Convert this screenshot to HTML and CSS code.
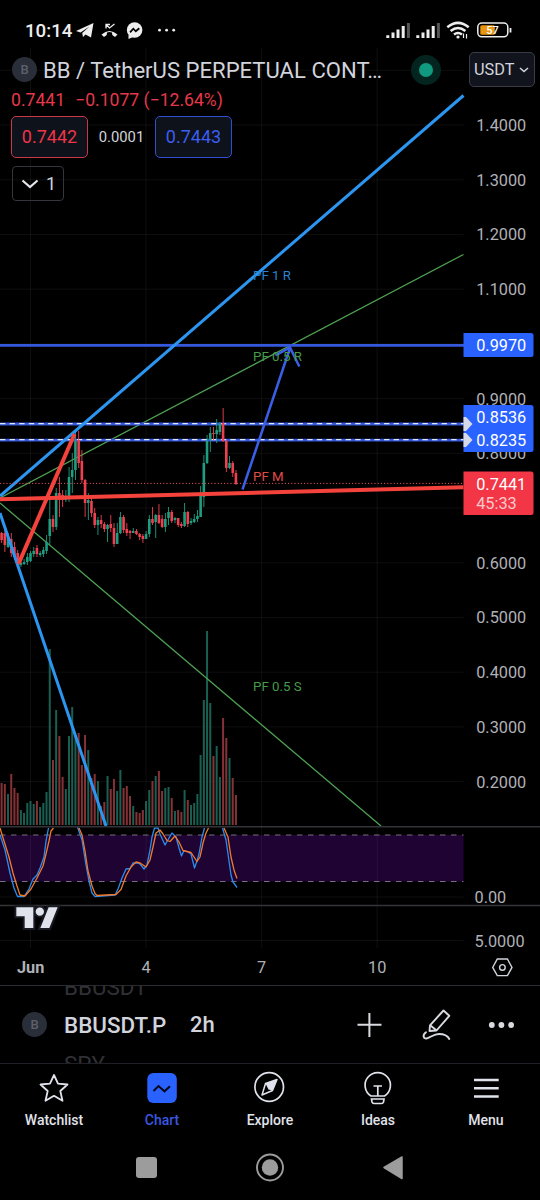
FILE: index.html
```html
<!DOCTYPE html>
<html lang="en">
<head>
    <meta charset="UTF-8">
    <title>BBUSDT.P</title>
    <link rel="stylesheet" href="styles.css">
</head>
<body>
<div class="status">
    <span class="clock">10:14</span>
    <svg class="notif" width="104" height="20" viewBox="76 20 104 20">
        <path d="M76 31 L93.5 23 L91 37.5 L85.5 34.5 L83 37 L82.2 33 L89.5 26.5 L80.5 32.5Z" fill="#eee"/>
        <path d="M101.5 34.5 Q109.5 27.5 117.5 34.5 L115 37 L112.3 35 L112 32.6 Q109.5 31.6 107 32.6 L106.7 35 L104 37Z" fill="#eee"/>
        <path d="M106 28.5 V24.5 H110 M106.3 24.8 L109.5 28 L114.5 24" fill="none" stroke="#eee" stroke-width="1.3"/>
        <circle cx="134.6" cy="30" r="7.8" fill="#eee"/>
        <path d="M128.5 35 L128.5 39 L133 37Z" fill="#eee"/>
        <path d="M130 32.3 L133.3 28.7 L135.8 31.3 L139.3 28.3" fill="none" stroke="#000" stroke-width="1.8"/>
        <circle cx="159.5" cy="30.2" r="1.4" fill="#eee"/>
        <circle cx="166.6" cy="30.2" r="1.4" fill="#eee"/>
        <circle cx="173.7" cy="30.2" r="1.4" fill="#eee"/>
    </svg>
    <svg class="signal" width="128" height="22" viewBox="385 19 128 22">
        <g stroke="#eee" stroke-width="3">
            <path d="M387.8 38 V35.2 M393 38 V32.5 M398 38 V29.5 M403.2 38 V26"/>
            <path d="M417.8 38 V35.2 M423 38 V32.5 M428 38 V29.5 M433.2 38 V26"/>
            <path d="M408.4 38 V23 M438.4 38 V23" stroke="#555"/>
        </g>
        <g fill="none" stroke="#eee" stroke-width="2.5">
            <path d="M447.3 27.2 Q458 18.5 468.7 27.2"/>
            <path d="M450.6 31 Q458 25 465.4 31"/>
            <path d="M454 34.6 Q458 31.5 462 34.6"/>
        </g>
        <circle cx="458" cy="37" r="1.6" fill="#eee"/>
        <path d="M463.5 33.5 V38 M466.5 34 V38.5" stroke="#eee" stroke-width="1.2"/>
        <rect x="477.8" y="23" width="30" height="13.8" rx="4" fill="none" stroke="#eee" stroke-width="1.5"/>
        <rect x="480.3" y="25.3" width="14.5" height="9.4" rx="1.5" fill="#e8960f"/>
        <path d="M510.5 28 V32.5" stroke="#eee" stroke-width="1.8"/>
        <text x="492.6" y="34.4" text-anchor="middle" class="battery">57</text>
    </svg>
</div>

<div class="chart">
    <svg class="plot" width="540" height="938" viewBox="0 48 540 938">
        <g id="grid" class="grid"></g>
        <rect x="0" y="835" width="463.5" height="46.5" fill="#1f0333"/>
        <g class="grid">
            <path d="M30.5 835 V881 M146.1 835 V881 M261.6 835 V881 M377.2 835 V881"/>
        </g>
        <path class="band" d="M0 835 H463.5 M0 881.5 H463.5"/>
        <g id="volume"></g>

        <g class="pitchfork">
            <path d="M0 498 L463.5 254.5 M0 503 L381 826" stroke="#4ea052" stroke-width="1.3"/>
            <path d="M0 345.3 H464 M0 424 H464 M0 440.2 H464" stroke="#3558dc" stroke-width="2.8"/>
            <path d="M0 423.6 H464 M0 439.6 H464" stroke="#dfe3f5" stroke-width="1.2" stroke-dasharray="5.4 4.2"/>
        </g>
        <g id="candles"></g>
        <g class="pitchfork">
            <path d="M0 496 L463.5 95.5 M0 513 L106 826" stroke="#2b95f0" stroke-width="3"/>
            <path d="M0 499.3 L463.5 487.3" stroke="#f4433c" stroke-width="4"/>
            <path d="M18.5 564 L74.5 434" stroke="#f4433c" stroke-width="4"/>
            <path d="M0 483.4 H464" stroke="#d9505a" stroke-width="1" stroke-dasharray="1.2 2"/>
            <path d="M242.5 489.5 L290 348 M275.5 355.5 L290 347.5 L299.3 366.5" stroke="#3a5fe6" stroke-width="2.5"/>
        </g>
        <g class="fork-label">
            <text x="253" y="280.3" fill="#2b82d2">PF 1 R</text>
            <text x="253" y="361.1" fill="#479a4a">PF 0.5 R</text>
            <text x="253" y="480.7" fill="#e04a48">PF M</text>
            <text x="253" y="691.1" fill="#479a4a">PF 0.5 S</text>
        </g>

        <!-- stochastic -->
        <g fill="none" stroke-width="1.3" stroke-linejoin="round">
            <path stroke="#2b8cf0" d="M0 835 L5 850 L10 873 L14 888 L17.5 896.5 L24 896.5 L29 889 L33 879 L37 875 L40 868 L44 857 L46 841 L48.5 828 M77.5 827 L82 840 L86 865 L89 881 L92 893 L95 896.5 L115 895 L118 889 L122 878 L126 869 L130 868.5 L133 863 L137 863 L140 864 L144 869 L147 865 L150 850 L152 837 L154.5 828 L158 828 L160 834 L165 845 L169 838 L172 833 L176 837 L179 848 L181.5 856 L184 850.5 L188 852 L191 854 L194.5 868 L197 861 L199 854 L202 837 L204.5 828 M222.5 828 L226 840 L229 861 L231 875 L233 882 L237 887.5"/>
            <path stroke="#f07a2c" d="M0 828 L4 841 L9 857 L13 873 L17 886 L20 895 L25 896 L31 889 L37 878 L43 866 L46 854 L49 841 L51 831 L53.5 828 M79 828 L82 835 L85 851 L88 871 L92 886 L95 893.5 L97 895.5 L116 894.5 L121 889.5 L126 876 L131 867 L136 862 L140 863 L146 867 L150 860 L153 847 L156 833 L160 830 L163 834 L167 840.5 L170 841.5 L175 836 L179 842 L183 850.5 L191 852.5 L197 861.5 L200 857 L203 843 L206 833 L208.5 828 M224 828 L228 837 L231 857 L234 870 L237 878.5"/>
        </g>

        <path class="divider" d="M0 826.8 H540 M0 905.4 H540"/>
        <g transform="translate(0 820) scale(.3333)">
            <path id="tv" d="M49 262 H100 V324 H74 V289 H49Z M146 262 H173 L148 324 H121Z M132 275 A12.5 12.5 0 1 1 107 275 A12.5 12.5 0 1 1 132 275Z" fill="#e0e3eb" stroke="#171a22" stroke-width="12" paint-order="stroke"/>
        </g>

        <g id="prices" class="axis"></g>
        <g class="axis">
            <text x="474.5" y="902.9">0.00</text>
            <text x="474.5" y="946.9">5.0000</text>
            <text x="17" y="973" class="month">Jun</text>
            <text x="146.2" y="973" text-anchor="middle">4</text>
            <text x="261.6" y="973" text-anchor="middle">7</text>
            <text x="377.2" y="973" text-anchor="middle">10</text>
        </g>
        <path d="M497.3 959 H507.4 L512 967.4 L507.4 975.6 H497.3 L492.7 967.4Z" fill="none" stroke="#d1d4dc" stroke-width="1.4"/>
        <circle cx="502.4" cy="967.4" r="2.8" fill="none" stroke="#d1d4dc" stroke-width="1.4"/>

        <g class="tags">
            <path d="M463.5 333 H531 Q533.5 333 533.5 335.5 V354.5 Q533.5 357 531 357 H463.5Z" fill="#2962ff"/>
            <path d="M463.5 405 H531 Q533.5 405 533.5 407.5 V449.5 Q533.5 452 531 452 H463.5Z" fill="#2962ff"/>
            <path d="M463.5 471.5 H531 Q533.5 471.5 533.5 474 V512.5 Q533.5 515 531 515 H463.5Z" fill="#f23645"/>
            <path d="M463.5 417 H466 L472.5 424 L466 431 H463.5Z M463.5 433 H466 L472.5 440 L466 447 H463.5Z" fill="#d5d9e8"/>
            <text x="476.2" y="351.2">0.9970</text>
            <text x="476.2" y="422.7">0.8536</text>
            <text x="476.2" y="446.1">0.8235</text>
            <text x="476.2" y="489.6">0.7441</text>
            <text x="476.2" y="509" fill="#fcc9cc">45:33</text>
        </g>
    </svg>

    <div class="legend">
        <div class="title-row">
            <span class="coin">B</span>
            <span class="title">BB / TetherUS PERPETUAL CONT…</span>
            <span class="market"></span>
            <span class="currency">USDT
                <svg width="10" height="6" viewBox="0 0 10 6"><path d="M1 1 L5 4.5 L9 1" fill="none" stroke="#d1d4dc" stroke-width="1.6"/></svg>
            </span>
        </div>
        <div class="change"><span>0.7441</span><span>−0.1077 (−12.64%)</span></div>
        <div class="quotes">
            <span class="quote sell">0.7442</span>
            <span class="spread">0.0001</span>
            <span class="quote buy">0.7443</span>
        </div>
        <div class="collapse">
            <svg width="18" height="10" viewBox="0 0 18 10"><path d="M1.5 1.5 L9 8 L16.5 1.5" fill="none" stroke="#e4e6ec" stroke-width="2.2"/></svg>
            <span>1</span>
        </div>
    </div>
</div>

<div class="toolbar">
    <span class="coin">B</span>
    <div class="symbols">
        <span class="near">BBUSDT</span>
        <span>BBUSDT.P</span>
        <span class="near">SPY</span>
    </div>
    <span class="interval">2h</span>
    <svg class="tools" width="160" height="36" viewBox="356 1007 160 36">
        <path d="M357.5 1024.8 H381.5 M369.4 1013 V1037" stroke="#d8dae0" stroke-width="2"/>
        <g fill="none" stroke="#d8dae0" stroke-width="1.9" stroke-linejoin="round" stroke-linecap="round">
            <path d="M443.5 1010.5 L449.3 1015.8 L436.5 1030.5 L429.5 1031 L430 1025.3Z M430.5 1025.5 L436 1030"/>
            <path d="M426 1032.3 C422 1035 423.5 1039.5 427 1038.3 C431 1037 434 1034 439 1034 C444.5 1034 448 1036.5 449.3 1039"/>
        </g>
        <circle cx="491.8" cy="1025" r="2.9" fill="#d8dae0"/>
        <circle cx="501.4" cy="1025" r="2.9" fill="#d8dae0"/>
        <circle cx="511.1" cy="1025" r="2.9" fill="#d8dae0"/>
    </svg>
</div>

<div class="tabs">
    <a class="tab">
        <svg width="32" height="36" viewBox="-16 -18 32 36"><path d="M0 -13 L4 -4.3 L13.5 -3.5 L6.3 3 L8.5 12.8 L0 7.8 L-8.5 12.8 L-6.3 3 L-13.5 -3.5 L-4 -4.3Z" fill="none" stroke="#e0e3eb" stroke-width="1.8" stroke-linejoin="round"/></svg>
        <span>Watchlist</span>
    </a>
    <a class="tab active">
        <svg width="32" height="36" viewBox="-16 -18 32 36"><rect x="-14.7" y="-15" width="29.5" height="30" rx="6" fill="#2962ff"/><path d="M-8.5 3 L-3.5 -2 L2.5 3.3 L8 -1.8" fill="none" stroke="#05081a" stroke-width="2"/></svg>
        <span>Chart</span>
    </a>
    <a class="tab">
        <svg width="32" height="36" viewBox="-16 -18 32 36"><circle cx="-.8" cy="-1" r="14.3" fill="none" stroke="#e0e3eb" stroke-width="1.7"/><path d="M7 -8.5 L2.5 2.5 L-8 7 L-4.5 -4.5Z" fill="none" stroke="#e0e3eb" stroke-width="1.5" stroke-linejoin="round"/><path d="M7 -8.5 L2.5 2.5 L-1.5 1.5 L-4.5 -4.5Z" fill="#e0e3eb"/></svg>
        <span>Explore</span>
    </a>
    <a class="tab">
        <svg width="32" height="36" viewBox="-16 -18 32 36"><path d="M-7 8 A12.7 12.7 0 1 1 6.5 8 Z M-6.5 11 H6 L5.5 14 Q5 15.5 3.5 15.5 H-4 Q-5.5 15.5 -6 14Z M-4.5 -2 H4 M-.2 -2 V8" fill="none" stroke="#e0e3eb" stroke-width="1.7"/></svg>
        <span>Ideas</span>
    </a>
    <a class="tab">
        <svg width="32" height="36" viewBox="-16 -18 32 36"><path d="M-12 -8 H12.7 M-12 .3 H12.7 M-12 8.5 H12.7" stroke="#e0e3eb" stroke-width="2.4"/></svg>
        <span>Menu</span>
    </a>
</div>

<div class="nav">
    <svg width="270" height="32" viewBox="135 1152 270 32">
        <rect x="136" y="1157" width="21" height="21" rx="3" fill="#9c9c9c"/>
        <circle cx="270" cy="1167.5" r="13" fill="none" stroke="#9c9c9c" stroke-width="1.9"/>
        <circle cx="270" cy="1167.5" r="8.2" fill="#9c9c9c"/>
        <path d="M384 1167.5 L402 1157 V1178.5Z" fill="#9c9c9c" stroke="#9c9c9c" stroke-width="1.5" stroke-linejoin="round"/>
    </svg>
</div>

<script src="chart.js"></script>
</body>
</html>
```

FILE: styles.css
```css
* {
    margin: 0;
    padding: 0;
    box-sizing: border-box;
}

body {
    width: 540px;
    height: 1200px;
    overflow: hidden;
    background-color: #000;
    color: #d1d4dc;
    font-family: Roboto, "Liberation Sans", sans-serif;
}

svg {
    display: block;
    flex: none;
}

/* status bar */
.status {
    display: flex;
    align-items: center;
    height: 48px;
    padding: 12px 27px 0 25px;
}

.clock {
    width: 51px;
    padding-top: 1px;
    font-size: 18.7px;
    font-weight: 500;
    color: #eee;
}

.signal {
    margin-left: auto;
}

.battery {
    font-size: 11px;
    font-weight: 500;
    fill: #fff;
}

/* chart */
.chart {
    display: grid;
    height: 938px;
    border-bottom: 1px solid #2a2a30;
}

.plot,
.legend {
    grid-area: 1 / 1;
}

.grid {
    stroke: #fff;
    stroke-opacity: .055;
}

.band {
    stroke: #77707f;
    stroke-dasharray: 5.5 5.5;
}

.divider {
    stroke: #34343b;
    stroke-width: 1.5;
}

.pitchfork {
    fill: none;
}

.fork-label {
    font-size: 13.3px;
}

.axis {
    font-size: 16.3px;
    fill: #b0b1b6;
}

.month {
    font-weight: 700;
}

.tags {
    font-size: 16.3px;
    fill: #fff;
}

.legend {
    padding: 4px 5px 0 11px;
}

.title-row {
    display: flex;
    align-items: center;
    height: 35px;
    padding-left: 1px;
}

.coin {
    width: 25px;
    height: 25px;
    border-radius: 50%;
    background-color: #2a2e39;
    color: #5d606b;
    font-size: 13px;
    font-weight: 500;
    line-height: 25px;
    text-align: center;
}

.title {
    width: 368px;
    margin-left: 6px;
    font-size: 22.1px;
    white-space: nowrap;
}

.market {
    width: 30px;
    height: 30px;
    border: 8px solid #04251f;
    border-radius: 50%;
    background-color: #109a80;
}

.currency {
    display: flex;
    align-items: center;
    justify-content: space-between;
    width: 66px;
    height: 35px;
    margin-left: auto;
    padding: 0 5px 0 4px;
    border: 1px solid #3a3d48;
    border-radius: 5px;
    background-color: #11141d;
    font-size: 16.3px;
}

.change {
    display: flex;
    gap: 10px;
    height: 25px;
    line-height: 26px;
    font-size: 17.6px;
    color: #e5384a;
}

.quotes {
    display: flex;
    align-items: center;
    margin-top: 4px;
}

.quote {
    width: 77px;
    height: 42px;
    border: 1px solid;
    border-radius: 5px;
    background-color: #0e121b;
    font-size: 18px;
    line-height: 40px;
    text-align: center;
}

.sell {
    border-color: #c8374a;
    color: #ee3549;
}

.buy {
    border-color: #2f4fd0;
    color: #3d5ef0;
}

.spread {
    width: 67px;
    font-size: 14.8px;
    text-align: center;
}

.collapse {
    display: flex;
    align-items: center;
    gap: 7px;
    width: 52px;
    height: 35px;
    margin: 8px 0 0 1px;
    padding-left: 8px;
    border: 1px solid #35363c;
    border-radius: 4px;
    font-size: 18px;
}

/* symbol toolbar */
.toolbar {
    display: flex;
    align-items: center;
    height: 78px;
    padding: 0 24px 0 22px;
    border-bottom: 1px solid #202126;
}

.symbols {
    display: flex;
    flex-direction: column;
    justify-content: center;
    width: 126px;
    height: 77px;
    padding-top: 2px;
    margin-left: 17px;
    overflow: hidden;
    font-size: 22.4px;
    font-weight: 500;
    line-height: 38.5px;
}

.symbols span {
    flex: none;
}

.symbols .near {
    color: #303136;
    font-weight: 400;
}

.interval {
    font-size: 22px;
    font-weight: 500;
}

.tools {
    margin-left: auto;
}

/* bottom tabs */
.tabs {
    display: grid;
    grid-template-columns: repeat(5, 1fr);
    height: 72px;
}

.tab {
    display: flex;
    flex-direction: column;
    align-items: center;
    gap: 6px;
    padding-top: 6px;
    color: #e0e3eb;
    font-size: 14px;
    font-weight: 500;
}

.tab.active {
    color: #3b57e0;
}

.nav {
    display: flex;
    justify-content: center;
    padding-top: 16px;
}
```

FILE: chart.js
```javascript
var NS = 'http://www.w3.org/2000/svg';
var UP = '#1f9d80';
var DOWN = '#ee4050';

// direction, volume height, high, open/close top, open/close bottom, low
var bars = [
    ['d', 42, 532, 533, 540, 543], ['d', 41, 530, 533, 545, 552], ['u', 31, 533, 537, 547, 548],
    ['d', 51, 533, 539, 553, 557], ['d', 37, 542, 547, 557, 560], ['d', 32, 550, 553, 563, 566],
    ['u', 15, 560, 563, 565, 567], ['u', 12, 559, 562, 564, 565], ['u', 22, 553, 557, 562, 565],
    ['u', 24, 551, 553, 561, 562], ['u', 21, 547, 551, 554, 557], ['d', 24, 545, 548, 554, 557],
    ['u', 18, 551, 553, 555, 557], ['u', 22, 547, 550, 554, 557], ['u', 33, 535, 542, 551, 554],
    ['u', 176, 500, 519, 536, 545], ['d', 65, 515, 519, 527, 532], ['u', 115, 488, 493, 527, 530],
    ['d', 89, 477, 493, 500, 517], ['d', 48, 490, 495, 500, 507], ['u', 36, 490, 498, 500, 502],
    ['u', 89, 467, 477, 499, 502], ['u', 118, 453, 470, 477, 493], ['u', 90, 431, 441, 470, 480],
    ['d', 92, 431, 440, 463, 468], ['d', 60, 450, 461, 480, 483], ['d', 90, 479, 480, 503, 517],
    ['u', 75, 493, 500, 503, 520], ['d', 47, 497, 501, 513, 517], ['d', 51, 508, 513, 525, 528],
    ['u', 44, 517, 520, 525, 535], ['d', 19, 515, 520, 524, 528], ['d', 23, 522, 524, 529, 532],
    ['u', 49, 524, 525, 529, 542], ['d', 36, 515, 524, 528, 532], ['d', 46, 523, 528, 544, 547],
    ['u', 34, 523, 533, 544, 544], ['u', 55, 512, 517, 533, 534], ['d', 37, 515, 517, 530, 533],
    ['d', 39, 523, 529, 533, 536], ['d', 29, 530, 531, 533, 539], ['u', 19, 528, 531, 533, 533],
    ['d', 13, 529, 531, 534, 535], ['d', 12, 533, 534, 537, 540], ['d', 15, 534, 536, 539, 543],
    ['u', 24, 531, 534, 539, 539], ['u', 35, 515, 519, 534, 537], ['d', 44, 507, 519, 523, 525],
    ['u', 49, 514, 515, 522, 538], ['d', 54, 504, 515, 523, 524], ['d', 34, 515, 519, 527, 528],
    ['u', 37, 513, 519, 527, 532], ['u', 38, 507, 512, 518, 525], ['d', 27, 510, 512, 521, 523],
    ['u', 14, 517, 518, 520, 523], ['d', 15, 518, 518, 525, 527], ['d', 13, 522, 524, 526, 528],
    ['u', 35, 503, 512, 526, 527], ['d', 25, 511, 512, 524, 527], ['u', 20, 518, 521, 523, 525],
    ['u', 22, 514, 519, 522, 523], ['u', 31, 510, 516, 519, 522], ['u', 70, 486, 493, 517, 517],
    ['u', 125, 455, 463, 497, 507], ['u', 194, 435, 441, 463, 464], ['u', 122, 427, 433, 440, 452],
    ['d', 69, 427, 433, 434, 440], ['u', 79, 419, 430, 434, 443], ['u', 48, 422, 424, 432, 435],
    ['d', 107, 408, 423, 441, 442], ['d', 87, 440, 441, 468, 472], ['u', 67, 456, 463, 468, 469],
    ['d', 47, 461, 463, 473, 477], ['d', 30, 470, 473, 484, 485]
];

function draw(parent, tag, attrs) {
    var el = document.createElementNS(NS, tag);
    for (var key in attrs) {
        el.setAttribute(key, attrs[key]);
    }
    document.getElementById(parent).appendChild(el);
    return el;
}

function priceY(price) {
    return 125 + (1.4 - price) * 547.2;
}

// grid lines
for (var n = 0; n < 4; n++) {
    draw('grid', 'path', {d: 'M' + (30.5 + n * 115.55) + ' 48 V948'});
}
for (var p = 15; p >= 2; p--) {
    draw('grid', 'path', {d: 'M0 ' + priceY(p / 10) + ' H463.5'});
    if (p < 15 && p != 10 && p != 7) {
        draw('prices', 'text', {x: 476.2, y: priceY(p / 10) + 5.9}).textContent = (p / 10).toFixed(4);
    }
}
draw('grid', 'path', {d: 'M0 897 H463.5 M0 940.5 H463.5'});

for (var i = 0; i < bars.length; i++) {
    var b = bars[i];
    var x = 1.6 + i * 3.21;
    var color = b[0] == 'u' ? UP : DOWN;
    draw('volume', 'rect', {
        x: x - 1, y: 825 - b[1], width: 2, height: b[1],
        fill: b[0] == 'u' ? '#1b5f52' : '#853236'
    });
    draw('candles', 'rect', {x: x - .4, y: b[2], width: .9, height: b[5] - b[2], fill: color});
    draw('candles', 'rect', {x: x - 1.3, y: b[3], width: 2.6, height: b[4] - b[3], fill: color});
}
```
